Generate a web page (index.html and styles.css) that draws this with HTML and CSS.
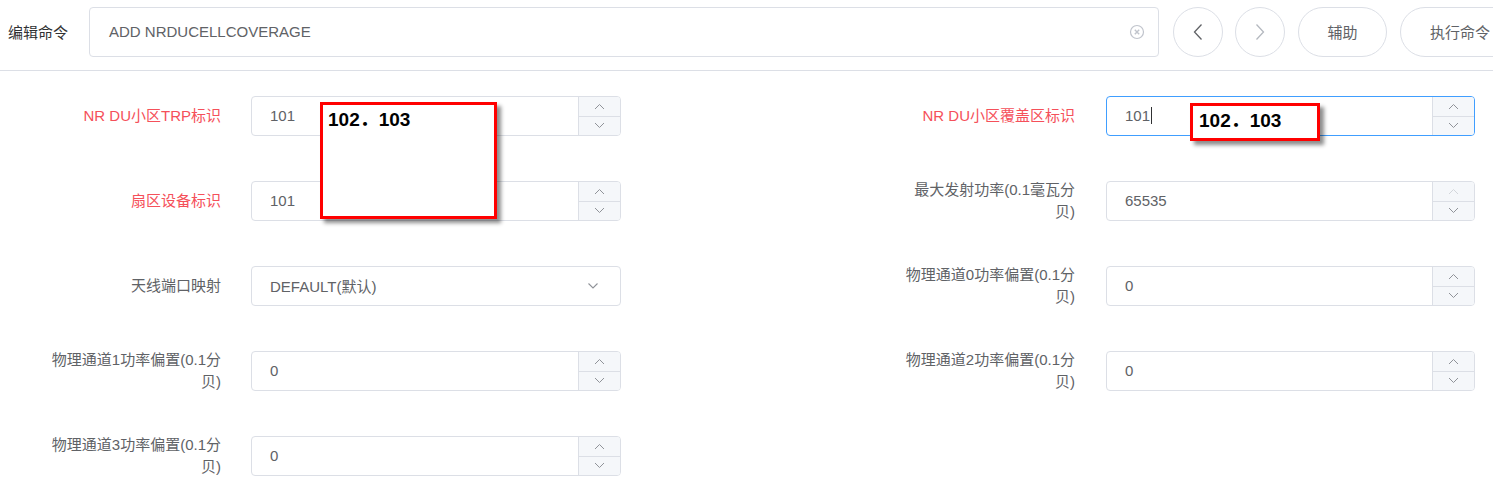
FILE: index.html
```html
<!DOCTYPE html>
<html lang="zh-CN">
<head>
<meta charset="utf-8">
<title>编辑命令</title>
<link rel="stylesheet" href="styles.css">
</head>
<body>
<div class="page">
  <div class="topbar">
    <span class="top-label">编辑命令</span>
    <div class="cmd-input">
      <span class="cmd-text">ADD NRDUCELLCOVERAGE</span>
      <svg class="clear-icon" width="16" height="16" viewBox="0 0 16 16"><circle cx="8" cy="8" r="6.5" fill="none" stroke="#c0c4cc" stroke-width="1.2"/><path d="M5.8 5.8 L10.2 10.2 M10.2 5.8 L5.8 10.2" stroke="#c0c4cc" stroke-width="1.4"/></svg>
    </div>
    <button class="circle-btn"><svg width="12" height="18" viewBox="0 0 12 18"><path d="M9.5 1.5 L2.5 9 L9.5 16.5" fill="none" stroke="#606266" stroke-width="1.3"/></svg></button>
    <button class="circle-btn"><svg width="12" height="18" viewBox="0 0 12 18"><path d="M2.5 1.5 L9.5 9 L2.5 16.5" fill="none" stroke="#b4b8bf" stroke-width="1.3"/></svg></button>
    <button class="pill-btn">辅助</button>
    <button class="pill-btn wide">执行命令</button>
  </div>

  <div class="form">
    <div class="field">
      <label class="lbl required">NR DU小区TRP标识</label>
      <div class="num-input"><span class="val">101</span><div class="spin"><span class="up"><svg width="11" height="7" viewBox="0 0 11 7"><path d="M1 6 L5.5 1.5 L10 6" fill="none" stroke="#909399" stroke-width="1"/></svg></span><span class="down"><svg width="11" height="7" viewBox="0 0 11 7"><path d="M1 1 L5.5 5.5 L10 1" fill="none" stroke="#909399" stroke-width="1"/></svg></span></div></div>
    </div>
    <div class="field right">
      <label class="lbl required">NR DU小区覆盖区标识</label>
      <div class="num-input focused"><span class="val">101<span class="caret"></span></span><div class="spin"><span class="up"><svg width="11" height="7" viewBox="0 0 11 7"><path d="M1 6 L5.5 1.5 L10 6" fill="none" stroke="#909399" stroke-width="1"/></svg></span><span class="down"><svg width="11" height="7" viewBox="0 0 11 7"><path d="M1 1 L5.5 5.5 L10 1" fill="none" stroke="#909399" stroke-width="1"/></svg></span></div></div>
    </div>

    <div class="field">
      <label class="lbl required">扇区设备标识</label>
      <div class="num-input"><span class="val">101</span><div class="spin"><span class="up"><svg width="11" height="7" viewBox="0 0 11 7"><path d="M1 6 L5.5 1.5 L10 6" fill="none" stroke="#909399" stroke-width="1"/></svg></span><span class="down"><svg width="11" height="7" viewBox="0 0 11 7"><path d="M1 1 L5.5 5.5 L10 1" fill="none" stroke="#909399" stroke-width="1"/></svg></span></div></div>
    </div>
    <div class="field right">
      <label class="lbl">最大发射功率(0.1毫瓦分贝)</label>
      <div class="num-input"><span class="val">65535</span><div class="spin"><span class="up"><svg width="11" height="7" viewBox="0 0 11 7"><path d="M1 6 L5.5 1.5 L10 6" fill="none" stroke="#d3d6db" stroke-width="1"/></svg></span><span class="down"><svg width="11" height="7" viewBox="0 0 11 7"><path d="M1 1 L5.5 5.5 L10 1" fill="none" stroke="#909399" stroke-width="1"/></svg></span></div></div>
    </div>

    <div class="field">
      <label class="lbl">天线端口映射</label>
      <div class="select-input"><span class="val">DEFAULT(默认)</span><svg class="sel-arrow" width="12" height="8" viewBox="0 0 12 8"><path d="M1.5 1.5 L6 6 L10.5 1.5" fill="none" stroke="#909399" stroke-width="1.1"/></svg></div>
    </div>
    <div class="field right">
      <label class="lbl">物理通道0功率偏置(0.1分贝)</label>
      <div class="num-input"><span class="val">0</span><div class="spin"><span class="up"><svg width="11" height="7" viewBox="0 0 11 7"><path d="M1 6 L5.5 1.5 L10 6" fill="none" stroke="#909399" stroke-width="1"/></svg></span><span class="down"><svg width="11" height="7" viewBox="0 0 11 7"><path d="M1 1 L5.5 5.5 L10 1" fill="none" stroke="#909399" stroke-width="1"/></svg></span></div></div>
    </div>

    <div class="field">
      <label class="lbl">物理通道1功率偏置(0.1分贝)</label>
      <div class="num-input"><span class="val">0</span><div class="spin"><span class="up"><svg width="11" height="7" viewBox="0 0 11 7"><path d="M1 6 L5.5 1.5 L10 6" fill="none" stroke="#909399" stroke-width="1"/></svg></span><span class="down"><svg width="11" height="7" viewBox="0 0 11 7"><path d="M1 1 L5.5 5.5 L10 1" fill="none" stroke="#909399" stroke-width="1"/></svg></span></div></div>
    </div>
    <div class="field right">
      <label class="lbl">物理通道2功率偏置(0.1分贝)</label>
      <div class="num-input"><span class="val">0</span><div class="spin"><span class="up"><svg width="11" height="7" viewBox="0 0 11 7"><path d="M1 6 L5.5 1.5 L10 6" fill="none" stroke="#909399" stroke-width="1"/></svg></span><span class="down"><svg width="11" height="7" viewBox="0 0 11 7"><path d="M1 1 L5.5 5.5 L10 1" fill="none" stroke="#909399" stroke-width="1"/></svg></span></div></div>
    </div>

    <div class="field">
      <label class="lbl">物理通道3功率偏置(0.1分贝)</label>
      <div class="num-input"><span class="val">0</span><div class="spin"><span class="up"><svg width="11" height="7" viewBox="0 0 11 7"><path d="M1 6 L5.5 1.5 L10 6" fill="none" stroke="#909399" stroke-width="1"/></svg></span><span class="down"><svg width="11" height="7" viewBox="0 0 11 7"><path d="M1 1 L5.5 5.5 L10 1" fill="none" stroke="#909399" stroke-width="1"/></svg></span></div></div>
    </div>
  </div>

  <div class="note note-a">102．103</div>
  <div class="note note-b">102．103</div>
</div>
</body>
</html>
```

FILE: styles.css
```css
* { box-sizing: border-box; }
html, body { margin: 0; padding: 0; background: #fff; overflow: hidden; }
body {
  font-family: "Liberation Sans", "Noto Sans CJK SC", sans-serif;
  font-size: 15px;
  color: #606266;
}
.page { position: relative; width: 1493px; height: 491px; overflow: hidden; }

.topbar {
  display: flex;
  align-items: center;
  height: 71px;
  padding: 0 0 7px 8px;
  border-bottom: 1px solid #dcdfe6;
  white-space: nowrap;
}
.top-label { color: #303133; margin-right: 21px; flex: none; }
.cmd-input {
  flex: none;
  width: 1070px;
  height: 50px;
  border: 1px solid #dcdfe6;
  border-radius: 4px;
  display: flex;
  align-items: center;
  padding: 0 13px 0 19px;
}
.cmd-text { flex: 1; color: #606266; }
.clear-icon { flex: none; }
.circle-btn {
  flex: none;
  width: 50px;
  height: 50px;
  border-radius: 50%;
  border: 1px solid #dcdfe6;
  background: #fff;
  margin-left: 12px;
  padding: 0;
  display: flex;
  align-items: center;
  justify-content: center;
}
.circle-btn:first-of-type { margin-left: 14px; }
.pill-btn {
  flex: none;
  height: 50px;
  width: 89px;
  border-radius: 25px;
  border: 1px solid #dcdfe6;
  background: #fff;
  margin-left: 13px;
  font: inherit;
  color: #606266;
  padding: 0;
}
.pill-btn.wide { width: 120px; text-align: left; padding-left: 29px; }

.form {
  display: grid;
  grid-template-columns: 575px 575px;
  justify-content: space-between;
  row-gap: 45px;
  padding: 25px 18px 0 46px;
}
.field {
  display: flex;
  align-items: center;
  height: 40px;
  gap: 30px;
}
.field.right { gap: 31px; }
.lbl {
  flex: none;
  width: 175px;
  text-align: right;
  line-height: 22px;
  color: #606266;
}
.lbl.required { color: #f5505a; }

.num-input, .select-input {
  flex: none;
  width: 370px;
  height: 40px;
  border: 1px solid #dcdfe6;
  border-radius: 4px;
  display: flex;
  align-items: stretch;
  overflow: hidden;
}
.field.right .num-input { width: 369px; }
.num-input.focused { border-color: #409eff; }
.val {
  flex: 1;
  display: flex;
  align-items: center;
  padding-left: 18px;
  padding-bottom: 1px;
  color: #606266;
}
.caret { display: inline-block; width: 1px; height: 17px; background: #303133; margin-left: 1px; }
.spin {
  flex: none;
  width: 42px;
  display: flex;
  flex-direction: column;
  background: #f5f7fa;
  border-left: 1px solid #dcdfe6;
}
.spin span {
  flex: 1;
  display: flex;
  align-items: center;
  justify-content: center;
}
.spin .up { border-bottom: 1px solid #dcdfe6; }
.select-input { align-items: center; padding-right: 21px; }
.sel-arrow { flex: none; }

.note {
  position: absolute;
  background: #fff;
  border: 3px solid #ff0000;
  box-shadow: 4px 4px 4px rgba(0, 0, 0, 0.45);
  color: #000;
  font-family: "Liberation Sans", "Noto Sans CJK SC", sans-serif;
  font-weight: bold;
  font-size: 19px;
  line-height: 22px;
  padding: 4px 0 0 5px;
  white-space: nowrap;
}
.note-a { left: 320px; top: 102px; width: 177px; height: 117px; }
.note-b { left: 1190px; top: 103px; width: 130px; height: 38px; padding-left: 6px; }
```
